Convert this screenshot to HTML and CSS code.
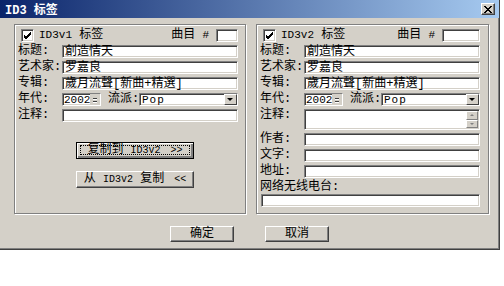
FILE: index.html
```
<!DOCTYPE html>
<html lang="zh">
<head>
  <meta charset="UTF-8" />
  <title>ID3 标签</title>
  <link rel="stylesheet" href="styles.css">
</head>
<body>

  <div class="dialog">
    <div class="titlebar">
      <span class="title"><span class="en">ID3</span> 标签</span>
      <span class="close">
        <svg viewBox="0 0 8 7" width="8" height="7"><path d="M0 0L7 7M1 0L8 7M7 0L0 7M8 0L1 7" stroke="#000" stroke-width="1"/></svg>
      </span>
    </div>

    <div class="content">
      <div class="panels">

        <!-- ID3v1 -->
        <div class="group">
          <div class="head">
            <span class="check"><svg viewBox="0 0 9 9" width="9" height="9"><path d="M1 4L3 6L8 1M1 5L3 7L8 2M1 6L3 8L8 3" stroke="#000" fill="none"/></svg></span>
            <span><span class="en">ID3v1</span> 标签</span>
            <span class="track">曲目 <span class="en">#</span></span>
            <span class="edit track-box v1"></span>
          </div>
          <div class="row"><label>标题:</label><div class="edit">創造情天</div></div>
          <div class="row"><label>艺术家:</label><div class="edit">罗嘉良</div></div>
          <div class="row"><label>专辑:</label><div class="edit">歲月流聲[新曲+精選]</div></div>
          <div class="row">
            <label>年代:</label>
            <div class="edit spin"><span class="en">2002</span><span class="arrows"><i class="up"></i><i class="down"></i></span></div>
            <label class="genre">流派:</label>
            <div class="edit combo"><span class="en pop">Pop</span><span class="drop"></span></div>
          </div>
          <div class="row"><label>注释:</label><div class="edit"></div></div>

          <div class="btn copy focused"><span>复制到 <span class="en">ID3v2</span><span class="en arrow">&gt;&gt;</span></span></div>
          <div class="btn copy second"><span>从 <span class="en">ID3v2</span> 复制<span class="en arrow">&lt;&lt;</span></span></div>
        </div>

        <!-- ID3v2 -->
        <div class="group wide">
          <div class="head">
            <span class="check"><svg viewBox="0 0 9 9" width="9" height="9"><path d="M1 4L3 6L8 1M1 5L3 7L8 2M1 6L3 8L8 3" stroke="#000" fill="none"/></svg></span>
            <span><span class="en">ID3v2</span> 标签</span>
            <span class="track">曲目 <span class="en">#</span></span>
            <span class="edit track-box v2"></span>
          </div>
          <div class="row"><label>标题:</label><div class="edit">創造情天</div></div>
          <div class="row"><label>艺术家:</label><div class="edit">罗嘉良</div></div>
          <div class="row"><label>专辑:</label><div class="edit">歲月流聲[新曲+精選]</div></div>
          <div class="row">
            <label>年代:</label>
            <div class="edit spin"><span class="en">2002</span><span class="arrows"><i class="up"></i><i class="down"></i></span></div>
            <label class="genre">流派:</label>
            <div class="edit combo"><span class="en pop">Pop</span><span class="drop"></span></div>
          </div>
          <div class="row tall">
            <label>注释:</label>
            <div class="edit memo"><span class="scroll"><i class="sb up"></i><i class="sb down"></i></span></div>
          </div>
          <div class="row"><label>作者:</label><div class="edit"></div></div>
          <div class="row"><label>文字:</label><div class="edit"></div></div>
          <div class="row"><label>地址:</label><div class="edit"></div></div>
          <div class="radio-label">网络无线电台:</div>
          <div class="edit radio"></div>
        </div>

      </div>

      <div class="actions">
        <div class="btn action">确定</div>
        <div class="btn action">取消</div>
      </div>
    </div>
  </div>

</body>
</html>
```
FILE: styles.css
```
body {
  margin: 0;
  background: #fff;
  font-family: "Liberation Mono", "Noto Sans CJK SC", monospace;
  font-size: 12px;
  color: #000;
}

.en {
  font-size: 11px;
}

.dialog {
  width: 500px;
  height: 250px;
  box-sizing: border-box;
  background: #d4d0c8;
  border-right: 1px solid #404040;
  border-bottom: 1px solid #404040;
  box-shadow: inset -1px -1px 0 #808080;
}

.titlebar {
  height: 18px;
  display: flex;
  align-items: center;
  justify-content: space-between;
  padding: 0 4px 0 5px;
  background: linear-gradient(to right, #0a246a, #a6caf0);
  color: #fff;
  font-weight: bold;
}

.title .en {
  font-size: 12px;
}

.close {
  width: 14px;
  height: 12px;
  box-sizing: border-box;
  display: flex;
  align-items: center;
  justify-content: center;
  background: #d4d0c8;
  border: 1px solid;
  border-color: #fff #404040 #404040 #fff;
  box-shadow: inset -1px -1px 0 #808080;
}

.content {
  padding: 6px 0 0 14px;
}

.panels {
  display: flex;
  gap: 10px;
}

.group {
  width: 232px;
  height: 190px;
  box-sizing: border-box;
  padding: 4px 0 0 3px;
  border: 1px solid #808080;
  box-shadow: 1px 1px 0 #fff, inset 1px 1px 0 #fff;
}

.group.wide {
  width: 233px;
}

.head,
.row {
  width: 220px;
  height: 13px;
  display: flex;
  align-items: center;
  margin-bottom: 3px;
  line-height: 13px;
  white-space: nowrap;
}

.check {
  width: 13px;
  height: 13px;
  box-sizing: border-box;
  margin: 0 5px 0 3px;
  display: flex;
  align-items: center;
  justify-content: center;
  background: #fff;
  border: 1px solid;
  border-color: #808080 #fff #fff #808080;
  box-shadow: inset 1px 1px 0 #404040, inset -1px -1px 0 #d4d0c8;
}

.track {
  margin-left: auto;
  margin-right: 7px;
}

.edit {
  height: 13px;
  box-sizing: border-box;
  background: #fff;
  border: 1px solid;
  border-color: #808080 #fff #fff #808080;
  box-shadow: inset 1px 1px 0 #404040, inset -1px -1px 0 #d4d0c8;
  padding-left: 2px;
  line-height: 12px;
  white-space: nowrap;
}

.row .edit {
  flex: 1;
}

.track-box.v1 {
  width: 22px;
}

.track-box.v2 {
  width: 38px;
}

label {
  width: 44px;
  flex: none;
}

.row .spin {
  flex: none;
  width: 39px;
  display: flex;
  align-items: center;
  padding-left: 1px;
}

.arrows {
  margin-left: auto;
  width: 12px;
  height: 11px;
  display: flex;
  flex-direction: column;
  justify-content: center;
  gap: 2px;
  background: #d4d0c8;
}

.arrows i {
  display: block;
  height: 1px;
  margin: 0 3px;
  background: #404040;
  box-shadow: 0 1px 0 #fff;
}

label.genre {
  width: 31px;
  margin-left: 7px;
}

.combo {
  display: flex;
  align-items: center;
}

.pop {
  letter-spacing: 1px;
}

.drop {
  margin-left: auto;
  width: 13px;
  height: 11px;
  box-sizing: border-box;
  background: #d4d0c8;
  border: 1px solid;
  border-color: #fff #404040 #404040 #fff;
  position: relative;
}

.drop::after {
  content: "";
  position: absolute;
  left: 2px;
  top: 3px;
  border-left: 3px solid transparent;
  border-right: 3px solid transparent;
  border-top: 3px solid #000;
}

.btn {
  height: 17px;
  box-sizing: border-box;
  display: flex;
  align-items: center;
  justify-content: center;
  white-space: pre;
  line-height: 13px;
  background: #d4d0c8;
  border: 1px solid;
  border-color: #fff #404040 #404040 #fff;
  box-shadow: inset -1px -1px 0 #808080;
}

.btn .en {
  font-size: 10px;
}

.btn .arrow {
  margin-left: 10px;
}

.btn.copy {
  width: 118px;
  margin-left: 58px;
}

.btn.focused {
  position: relative;
  margin-top: 20px;
  border-color: #000;
  box-shadow: inset 1px 1px 0 #fff, inset -2px -2px 0 #808080;
}

.btn.focused::after {
  content: "";
  position: absolute;
  inset: 2px 3px 3px 3px;
  border: 1px dotted #000;
}

.btn.second {
  margin-top: 12px;
}

.row.tall {
  height: 21px;
  align-items: flex-start;
}

.row .memo {
  height: 21px;
  display: flex;
  justify-content: flex-end;
  padding: 1px 1px 1px 0;
}

.scroll {
  width: 12px;
  display: flex;
  flex-direction: column;
  justify-content: space-between;
}

.sb {
  display: block;
  height: 8px;
  background: #d4d0c8;
  border: 1px solid;
  border-color: #fff #808080 #808080 #fff;
  position: relative;
}

.sb::after {
  content: "";
  position: absolute;
  left: 3px;
  top: 2px;
  border-left: 2px solid transparent;
  border-right: 2px solid transparent;
}

.sb.up::after {
  border-bottom: 2px solid #808080;
}

.sb.down::after {
  border-top: 2px solid #808080;
}

.radio-label {
  height: 13px;
  line-height: 13px;
}

.edit.radio {
  width: 219px;
  margin-left: 1px;
}

.actions {
  display: flex;
  gap: 31px;
  margin: 12px 0 0 156px;
}

.btn.action {
  width: 64px;
  height: 16px;
}
```
